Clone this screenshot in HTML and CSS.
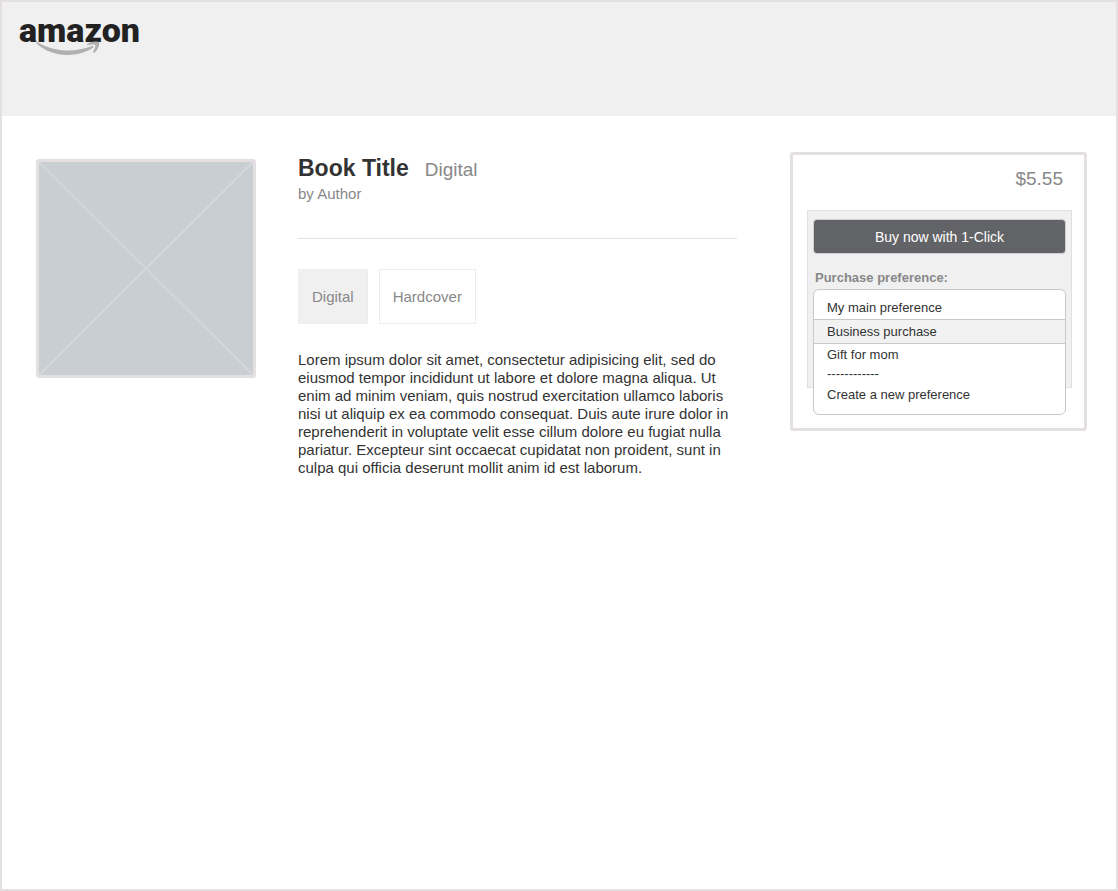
FILE: index.html
```html
<!DOCTYPE html>
<html lang="en">
<head>
  <meta charset="UTF-8" />
  <meta name="viewport" content="width=device-width, initial-scale=1.0"/>
  <title>Book Title</title>
  <link rel="stylesheet" href="styles.css">
</head>
<body>
  <header class="header">
    <a class="logo" href="#">
      <span class="logo-text">amazon</span>
      <svg class="logo-smile" viewBox="0 0 66 16" width="66" height="16" aria-hidden="true">
        <path d="M1 1 C18 11 38 12 56 5 C58 5 58 6 57 7 C40 17 16 17 0 2 Z" fill="#b0b0b0"/>
        <path d="M51 3 C55 0 61 0 63 1 C64 4 62 9 58 12 L57 11 C59 7 60 5 59 4 C57 3 54 4 51 4 Z" fill="#b0b0b0"/>
      </svg>
    </a>
  </header>

  <main class="product">
    <svg class="cover" viewBox="0 0 214 213" preserveAspectRatio="none" role="img" aria-label="Cover">
      <path d="M0 0 L214 213 M214 0 L0 213" stroke="#d3d8db" stroke-width="2"/>
    </svg>

    <section class="details">
      <div class="title-row">
        <h1>Book Title</h1>
        <span class="format">Digital</span>
      </div>
      <p class="author">by Author</p>
      <hr>
      <div class="formats">
        <button type="button" class="tab active">Digital</button>
        <button type="button" class="tab">Hardcover</button>
      </div>
      <p class="description">Lorem ipsum dolor sit amet, consectetur adipisicing elit, sed do eiusmod tempor incididunt ut labore et dolore magna aliqua. Ut enim ad minim veniam, quis nostrud exercitation ullamco laboris nisi ut aliquip ex ea commodo consequat. Duis aute irure dolor in reprehenderit in voluptate velit esse cillum dolore eu fugiat nulla pariatur. Excepteur sint occaecat cupidatat non proident, sunt in culpa qui officia deserunt mollit anim id est laborum.</p>
    </section>

    <aside class="buy-box">
      <p class="price">$5.55</p>
      <form class="buy-panel">
        <button type="button" class="buy">Buy now with 1-Click</button>
        <label for="preference">Purchase preference:</label>
        <div class="menu-anchor">
          <select id="preference" class="menu" name="preference" size="5">
            <option>My main preference</option>
            <option selected>Business purchase</option>
            <option>Gift for mom</option>
            <option class="divider" disabled>------------</option>
            <option>Create a new preference</option>
          </select>
        </div>
      </form>
    </aside>
  </main>
</body>
</html>
```
FILE: styles.css
```css
* {
  box-sizing: border-box;
}

body {
  font-family: "Liberation Sans", Arial, sans-serif;
  font-size: 15px;
  line-height: 18px;
  color: #333;
  background: #fff;
  margin: 0;
  min-height: 100vh;
  border: 2px solid #e4e0e2;
}

h1, p {
  margin: 0;
}

button, select {
  font-family: inherit;
}

.header {
  height: 114px;
  padding: 11px 17px;
  background: #f0f0f0;
}

.logo {
  display: inline-block;
  position: relative;
  color: #222;
  text-decoration: none;
}

.logo-text {
  display: block;
  font-family: Roboto, sans-serif;
  font-size: 34px;
  font-weight: 900;
  line-height: 34px;
}

.logo-smile {
  position: absolute;
  left: 17px;
  top: 28px;
}

.product {
  display: grid;
  grid-template-columns: 220px minmax(0, 1fr) 297px;
  column-gap: 42px;
  align-items: start;
  padding: 36px 29px 36px 34px;
}

.cover {
  width: 100%;
  height: 219px;
  margin-top: 7px;
  background: #c9ced2;
  border: 3px solid #e4e0e2;
  border-radius: 3px;
}

.details {
  padding: 3px 11px 0 0;
}

.title-row {
  display: flex;
  align-items: baseline;
  gap: 16px;
}

h1 {
  font-size: 23px;
  line-height: 26px;
}

.format, .price {
  font-size: 19px;
  line-height: 22px;
  color: #888;
}

.author {
  margin-top: 4px;
  color: #888;
}

hr {
  margin: 35px 0 30px;
  border: 0;
  border-top: 1px solid #e3e3e3;
}

.formats {
  display: flex;
  gap: 11px;
}

.tab {
  height: 55px;
  padding: 0 13px;
  font-size: 15px;
  color: #888;
  background: #fff;
  border: 1px solid #efedec;
}

.tab.active {
  background: #f0f0f0;
}

.description {
  margin-top: 27px;
}

.buy-box {
  padding: 13px 12px 40px 14px;
  border: 3px solid #e4e0e2;
  border-radius: 3px;
}

.price {
  padding-right: 9px;
  text-align: right;
}

.buy-panel {
  height: 178px;
  margin-top: 20px;
  padding: 8px 5px;
  background: #f0f0f0;
  border: 1px solid #e0e0e0;
}

.buy {
  display: block;
  width: 100%;
  height: 35px;
  margin-bottom: 15px;
  font-size: 14px;
  color: #fff;
  background: #626366;
  border: 1px solid #cfcfcf;
  border-radius: 4px;
}

label {
  display: block;
  padding-left: 2px;
  font-size: 13px;
  font-weight: bold;
  color: #888;
}

/* open list hangs over the bottom of the panel */
.menu-anchor {
  position: relative;
}

.menu {
  position: absolute;
  top: 2px;
  left: 0;
  width: 100%;
  height: 126px;
  padding: 7px 0;
  appearance: none;
  font-size: 13px;
  color: #333;
  background: #fff;
  border: 1px solid #c8c8c8;
  border-radius: 6px;
  outline: none;
  overflow: hidden;
}

.menu option {
  height: 22px;
  min-height: 0;
  padding: 3px 13px;
  color: #333;
}

.menu option:checked {
  height: 25px;
  padding-top: 4px;
  color: #333;
  background: #f2f2f2 linear-gradient(#f2f2f2, #f2f2f2);
  border-top: 1px solid #c8c8c8;
  border-bottom: 1px solid #c8c8c8;
}

.menu .divider {
  height: 18px;
  padding-top: 0;
  padding-bottom: 0;
}
```
